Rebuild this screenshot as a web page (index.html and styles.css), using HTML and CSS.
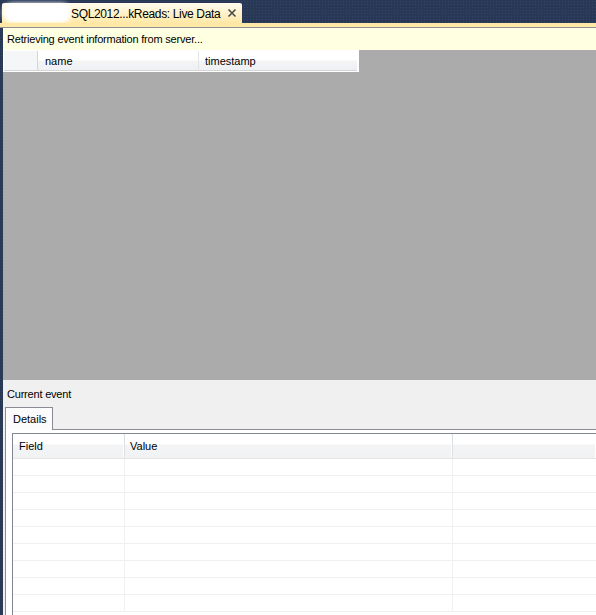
FILE: index.html
```html
<!DOCTYPE html>
<html>
<head>
<meta charset="utf-8">
<link rel="stylesheet" href="styles.css">
</head>
<body>
<div class="app">
  <div class="doc-tabs">
    <div class="doc-tab">
      <span class="redact"></span>
      <span class="doc-title">SQL2012...kReads: Live Data</span>
      <span class="close">
        <svg width="10" height="10" viewBox="0 0 10 10"><path d="M1.5 1.5 L8.5 8.5 M8.5 1.5 L1.5 8.5" stroke="#4b4b4b" stroke-width="1.6" fill="none"/></svg>
      </span>
    </div>
  </div>
  <div class="tab-strip"></div>
  <div class="main">
    <div class="infobar">Retrieving event information from server...</div>
    <div class="events">
      <div class="ev-header">
        <div class="ev-cell ev-rowhead"></div>
        <div class="ev-cell ev-name">name</div>
        <div class="ev-cell ev-ts">timestamp</div>
      </div>
    </div>
    <div class="details-pane">
      <div class="cur-label">Current event</div>
      <div class="tabs">
        <div class="tab active">Details</div>
      </div>
      <div class="tab-panel">
        <div class="grid">
          <div class="g-row g-head">
            <div class="g-cell c-field">Field</div>
            <div class="g-cell c-value">Value</div>
            <div class="g-cell c-fill"></div>
          </div>
          <div class="g-row"><div class="g-cell c-field"></div><div class="g-cell c-value"></div><div class="g-cell c-fill"></div></div>
          <div class="g-row"><div class="g-cell c-field"></div><div class="g-cell c-value"></div><div class="g-cell c-fill"></div></div>
          <div class="g-row"><div class="g-cell c-field"></div><div class="g-cell c-value"></div><div class="g-cell c-fill"></div></div>
          <div class="g-row"><div class="g-cell c-field"></div><div class="g-cell c-value"></div><div class="g-cell c-fill"></div></div>
          <div class="g-row"><div class="g-cell c-field"></div><div class="g-cell c-value"></div><div class="g-cell c-fill"></div></div>
          <div class="g-row"><div class="g-cell c-field"></div><div class="g-cell c-value"></div><div class="g-cell c-fill"></div></div>
          <div class="g-row"><div class="g-cell c-field"></div><div class="g-cell c-value"></div><div class="g-cell c-fill"></div></div>
          <div class="g-row"><div class="g-cell c-field"></div><div class="g-cell c-value"></div><div class="g-cell c-fill"></div></div>
          <div class="g-row"><div class="g-cell c-field"></div><div class="g-cell c-value"></div><div class="g-cell c-fill"></div></div>
        </div>
      </div>
    </div>
  </div>
</div>
</body>
</html>
```
FILE: styles.css
```css
* { box-sizing: border-box; }
html, body {
  margin: 0;
  padding: 0;
  width: 596px;
  height: 615px;
  overflow: hidden;
}
body {
  background-color: #293955;
  background-image: radial-gradient(#31446a 0.6px, transparent 0.9px);
  background-size: 3px 3px;
  font-family: "Liberation Sans", Arial, sans-serif;
  font-size: 11px;
  color: #000;
}
.app {
  display: flex;
  flex-direction: column;
  height: 615px;
}
.doc-tabs {
  height: 23px;
  padding: 3px 0 0 2px;
  display: flex;
}
.doc-tab {
  width: 240px;
  height: 20px;
  background: linear-gradient(#fffcf0, #fff0c4 60%, #ffe8a6);
  border-radius: 2px 2px 0 0;
  display: flex;
  align-items: center;
  font-size: 12px;
}
.redact {
  display: block;
  width: 62px;
  height: 14px;
  margin-left: 4px;
  margin-right: 3px;
  background: #fff;
  border-radius: 6px;
  box-shadow: 0 0 4px 3px #fff;
}
.doc-title {
  color: #000;
  white-space: nowrap;
  letter-spacing: -0.35px;
  padding-top: 1px;
}
.close {
  margin-left: auto;
  margin-right: 5px;
  width: 10px;
  height: 10px;
  display: flex;
}
.tab-strip {
  background: #ffe8a6;
  border-bottom: 1px solid #8e8f8f;
  height: 5px;
}
.main {
  flex: 1;
  margin-left: 3px;
  display: flex;
  flex-direction: column;
  min-height: 0;
}
.infobar {
  height: 22px;
  background: #ffffe1;
  padding-left: 4px;
  line-height: 22px;
  white-space: nowrap;
  letter-spacing: -0.2px;
}
.events {
  height: 330px;
  background: #ababab;
}
.ev-header {
  display: flex;
  width: 356px;
  height: 22px;
  border: 1px solid #fff;
  border-right: 2px solid #fff;
  background: #fff;
}
.ev-cell {
  height: 100%;
  line-height: 20px;
  white-space: nowrap;
  border-bottom: 1px solid #d5d5d5;
}
.ev-rowhead {
  width: 34px;
  background: #f5f6f7;
  border-right: 1px solid #d5d5d5;
}
.ev-name {
  width: 161px;
  padding-left: 7px;
  background: linear-gradient(#ffffff 45%, #f3f4f6 55%, #eff0f3);
  border-right: 1px solid #e3e4e6;
}
.ev-ts {
  flex: 1;
  padding-left: 6px;
  background: linear-gradient(#ffffff 45%, #f3f4f6 55%, #eff0f3);
}
.details-pane {
  flex: 1;
  background: #f0f0f0;
  display: flex;
  flex-direction: column;
  min-height: 0;
}
.cur-label {
  padding: 7px 0 0 4px;
  height: 26px;
  line-height: 14px;
  letter-spacing: -0.2px;
}
.tabs {
  display: flex;
  padding-left: 2px;
  height: 23px;
  align-items: flex-end;
}
.tab {
  height: 23px;
  width: 48px;
  border: 1px solid #898c95;
  border-bottom: none;
  background: #fcfcfc;
  padding: 3px 0 0 7px;
  line-height: 16px;
  position: relative;
  top: 1px;
}
.tab-panel {
  flex: 1;
  margin-left: 2px;
  background: #fff;
  border-top: 1px solid #898c95;
  border-left: 1px solid #898c95;
  padding: 3px 0 0 6px;
  min-height: 0;
}
.grid {
  border-top: 1px solid #828790;
  border-left: 1px solid #828790;
  height: 100%;
  overflow: hidden;
}
.g-row {
  display: flex;
  height: 17px;
  border-bottom: 1px solid #f0f0f0;
}
.g-head {
  height: 25px;
  border-bottom: 1px solid #e5e5e5;
  background: linear-gradient(#ffffff 42%, #f3f4f6 45%, #f1f2f4);
}
.g-cell {
  height: 100%;
  white-space: nowrap;
}
.g-head .g-cell {
  line-height: 25px;
  border-right: 1px solid #dcdde0;
  box-shadow: inset -1px 0 0 #fff;
}
.c-field {
  width: 112px;
  padding-left: 6px;
  border-right: 1px solid #f0f0f0;
}
.c-value {
  width: 328px;
  padding-left: 5px;
  border-right: 1px solid #f0f0f0;
}
.c-fill {
  flex: 1;
}
.g-head .c-fill {
  border-right: none;
}
```
